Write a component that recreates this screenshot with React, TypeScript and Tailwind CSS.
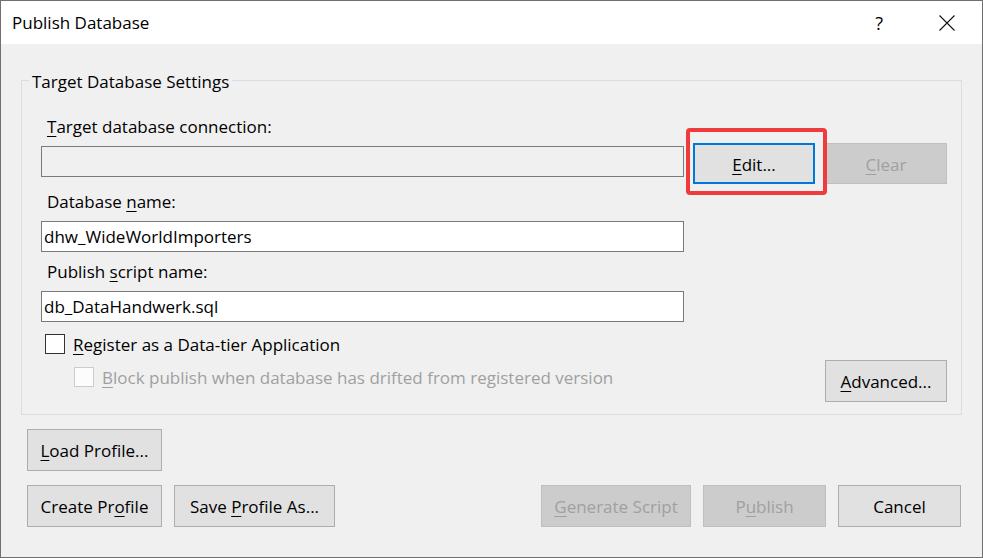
import React from "react";

const FONT = { fontFamily: "'Open Sans', 'Noto Sans', sans-serif" };

function U({ children }: { children: React.ReactNode }) {
  return <span className="underline decoration-1 underline-offset-[3px]">{children}</span>;
}

function Btn({
  w,
  h = 42,
  disabled = false,
  children,
}: {
  w: number;
  h?: number;
  disabled?: boolean;
  children: React.ReactNode;
}) {
  return (
    <div
      className={
        "flex shrink-0 items-center justify-center border pt-[2px] " +
        (disabled
          ? "border-[#bfbfbf] bg-[#cccccc] text-[#a0a0a0]"
          : "border-[#adadad] bg-[#e1e1e1] text-black")
      }
      style={{ width: w, height: h }}
    >
      {children}
    </div>
  );
}

function Input({ value, readOnly = false }: { value?: string; readOnly?: boolean }) {
  return (
    <div
      className={
        "flex h-[31px] w-[643px] shrink-0 items-center border border-[#7a7a7a] pl-[2px] " +
        (readOnly ? "bg-[#f0f0f0]" : "bg-white")
      }
    >
      {value}
    </div>
  );
}

export default function App() {
  return (
    <div
      className="flex h-[558px] w-[983px] flex-col border border-[#707070] bg-[#f0f0f0] text-[17px] leading-[20px] text-black"
      style={FONT}
    >
      {/* Title bar */}
      <div className="flex h-[43px] shrink-0 items-center bg-white pl-[11px] pr-[27px]">
        <span>Publish Database</span>
        <span className="ml-auto text-[18px]">?</span>
        <svg className="ml-[56px]" width="16" height="16" viewBox="0 0 16 16">
          <path d="M0.5 0.5 L15.5 15.5 M15.5 0.5 L0.5 15.5" stroke="#111" strokeWidth="1.1" fill="none" />
        </svg>
      </div>

      {/* Body */}
      <div className="flex flex-1 flex-col">
        <div className="px-[20px] pt-[24px]">
          <fieldset className="border border-[#dcdcdc] pb-[12px] pl-[19px] pr-[14px]">
            <legend className="-ml-[12px] px-[3px] leading-[24px]">
              <span className="relative top-[2px]">Target Database Settings</span>
            </legend>
            <div className="flex flex-col">
              <div className="ml-[6px] mt-[25px]">
                <U>T</U>arget database connection:
              </div>
              <div className="mt-[6px] flex items-start">
                <div className="mt-[3px]">
                  <Input readOnly />
                </div>
                <div className="relative ml-[9px]">
                  <div className="flex h-[41px] w-[122px] items-center justify-center border-2 border-[#0078d7] bg-[#e1e1e1] pt-[2px]">
                    <span>
                      <U>E</U>dit...
                    </span>
                  </div>
                  <div className="pointer-events-none absolute -bottom-[11px] -left-[7px] -right-[12px] -top-[15px] rounded-[4px] border-4 border-[#ee3b3b]" />
                </div>
                <div className="ml-[10px]">
                  <Btn w={122} h={41} disabled>
                    <span>
                      <U>C</U>lear
                    </span>
                  </Btn>
                </div>
              </div>
              <div className="ml-[6px] mt-[8px]">
                Database <U>n</U>ame:
              </div>
              <div className="mt-[9px]">
                <Input value="dhw_WideWorldImporters" />
              </div>
              <div className="ml-[6px] mt-[10px]">
                Publish <U>s</U>cript name:
              </div>
              <div className="mt-[9px]">
                <Input value="db_DataHandwerk.sql" />
              </div>
              <div className="mt-[12px] flex h-[20px] items-center">
                <div className="ml-[4px] h-[20px] w-[20px] border border-[#333333] bg-white" />
                <span className="relative top-[1px] ml-[8px]">
                  <U>R</U>egister as a Data-tier Application
                </span>
              </div>
              <div className="mt-[6px] flex items-start">
                <div className="ml-[33px] mt-[7px] flex h-[20px] items-center text-[#a0a0a0]">
                  <div className="h-[20px] w-[20px] border border-[#cccccc] bg-[#fcfcfc]" />
                  <span className="relative top-[1px] ml-[8px]">
                    <U>B</U>lock publish when database has drifted from registered version
                  </span>
                </div>
                <div className="ml-auto">
                  <Btn w={122}>
                    <span>
                      <U>A</U>dvanced...
                    </span>
                  </Btn>
                </div>
              </div>
            </div>
          </fieldset>
        </div>

        <div className="flex flex-col pl-[26px] pr-[21px]">
          <div className="mt-[14px]">
            <Btn w={135}>
              <span>
                <U>L</U>oad Profile...
              </span>
            </Btn>
          </div>
          <div className="mt-[14px] flex">
            <Btn w={135}>
              <span>
                Create Pr<U>o</U>file
              </span>
            </Btn>
            <div className="ml-[12px]">
              <Btn w={161}>
                <span>
                  Save <U>P</U>rofile As...
                </span>
              </Btn>
            </div>
            <div className="ml-auto flex gap-[12px]">
              <Btn w={150} disabled>
                <span>
                  <U>G</U>enerate Script
                </span>
              </Btn>
              <Btn w={123} disabled>
                <span>
                  P<U>u</U>blish
                </span>
              </Btn>
              <Btn w={123}>
                <span>Cancel</span>
              </Btn>
            </div>
          </div>
        </div>
      </div>
    </div>
  );
}
